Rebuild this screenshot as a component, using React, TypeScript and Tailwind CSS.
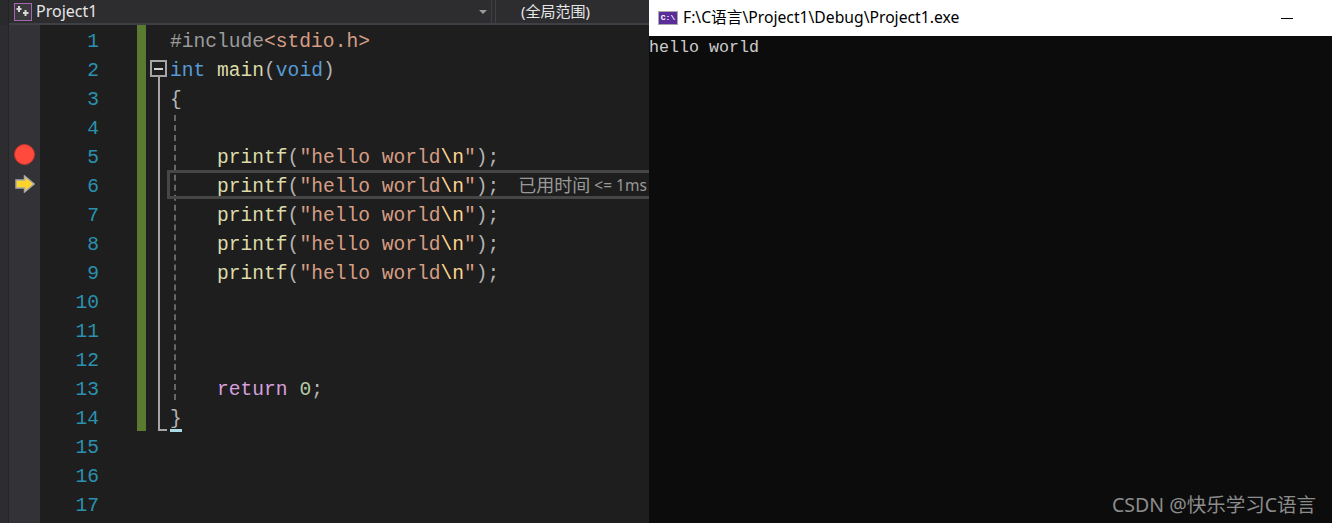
const mono = "[font-family:'Liberation_Mono','Noto_Sans_CJK_SC',monospace]";
const ui = "[font-family:'Noto_Sans','Noto_Sans_CJK_SC',sans-serif]";

function Str({ text }: { text: string }) {
  return (
    <>
      <span className="text-[#d69d85]">"{text}</span>
      <span className="text-[#ffd68f]">\n</span>
      <span className="text-[#d69d85]">"</span>
    </>
  );
}

function Printf() {
  return (
    <>
      {"    "}
      <span className="text-[#dcdcaa]">printf</span>
      <span className="text-[#b4b4b4]">(</span>
      <Str text="hello world" />
      <span className="text-[#b4b4b4]">);</span>
    </>
  );
}

const code = [
  <>
    <span className="text-[#9b9b9b]">#include</span>
    <span className="text-[#d69d85]">&lt;stdio.h&gt;</span>
  </>,
  <>
    <span className="text-[#569cd6]">int</span> <span className="text-[#dcdcaa]">main</span>
    <span className="text-[#b4b4b4]">(</span>
    <span className="text-[#569cd6]">void</span>
    <span className="text-[#b4b4b4]">)</span>
  </>,
  <span className="text-[#b4b4b4]">{"{"}</span>,
  "",
  <Printf />,
  <div className="flex items-start">
    <span>
      <Printf />
    </span>
    <span className={`${ui} ml-[19px] text-[18px] leading-[25px] text-[#999999]`}>已用时间</span>
    <span className={`${ui} ml-[4px] text-[15.500px] leading-[25px] text-[#999999]`}>&lt;= 1ms</span>
  </div>,
  <Printf />,
  <Printf />,
  <Printf />,
  "",
  "",
  "",
  <>
    {"    "}
    <span className="text-[#d8a0df]">return</span> <span className="text-[#b5cea8]">0</span>
    <span className="text-[#b4b4b4]">;</span>
  </>,
  <span className="text-[#b4b4b4]">{"}"}</span>,
];

const lineNumbers = Array.from({ length: 17 }, (_, i) => i + 1);

function ProjectIcon() {
  return (
    <svg width="18" height="18" viewBox="0 0 18 18" className="shrink-0">
      <rect x="0.5" y="0.5" width="17" height="17" fill="#3a3a3d" stroke="#a566b0" />
      <path d="M5 3v6M2.500 6h5M11.500 7v6M9 10h5.500" stroke="#d8d8d8" strokeWidth="2" fill="none" />
    </svg>
  );
}

function ArrowGlyph() {
  return (
    <svg width="20" height="18" viewBox="0 0 20 18" className="-mt-[2px]">
      <path d="M1 5h8.500V1L19 9l-9.500 8v-4H1z" fill="#ffd42a" stroke="#a8a8a8" strokeWidth="1.500" />
    </svg>
  );
}

function TopBar() {
  return (
    <div className="flex h-[25px] bg-[#2d2d30]">
      <div className="w-[9px] bg-[#2a2a2c] border-r border-[#232325]" />
      <div className="flex h-[25px] flex-1 items-center border-b-2 border-[#3f3f46]">
        <div className="flex w-[478px] items-center pl-[5px]">
          <ProjectIcon />
          <span className={`${ui} -mt-px ml-[4px] text-[16px] text-[#e6e6e6]`}>Project1</span>
          <span className="ml-auto h-0 w-0 border-x-[4px] border-x-transparent border-t-[4px] border-t-[#999999]" />
        </div>
        <div className="ml-[4px] h-full w-px bg-[#3f3f46]" />
        <div className="ml-[3px] h-full w-px bg-[#3f3f46]" />
        <span className={`${ui} ml-[25px] text-[15px] text-[#e6e6e6]`}>(全局范围)</span>
      </div>
    </div>
  );
}

function Editor() {
  return (
    <div className={`flex flex-1 overflow-hidden bg-[#1e1e1e] ${mono} text-[19.6px] leading-[29px]`}>
      <div className="w-[9px] bg-[#2d2d30] border-r border-[#252527]" />

      <div className="w-[31px] bg-[#333337]">
        {lineNumbers.map((n) => (
          <div key={n} className="flex h-[29px] items-center justify-center">
            {n === 5 && <div className="-mt-[2px] h-[21px] w-[21px] rounded-full border border-[#c8352c] bg-[#ff4a3d]" />}
            {n === 6 && <ArrowGlyph />}
          </div>
        ))}
      </div>

      <div className="w-[97px] pr-[38px] pt-[3px] text-right text-[#2b91af]">
        {lineNumbers.map((n) => (
          <div key={n} className="h-[29px]">{n}</div>
        ))}
      </div>

      <div className="h-[406px] w-[9px] bg-[#5a7a32]" />

      <div className="relative w-[24px]">
        <div className="absolute left-[4px] top-[35px] flex h-[17px] w-[17px] items-center justify-center border-2 border-[#a5a5a5] bg-[#1e1e1e]">
          <div className="h-[2px] w-[9px] bg-[#d0d0d0]" />
        </div>
        <div className="absolute left-[12px] top-[52px] h-[354px] w-[9px] border-b-2 border-l-2 border-[#a5a5a5]" />
      </div>

      <div className="relative flex-1 whitespace-pre pt-[3px]">
        {code.map((c, i) => (
          <div key={i} className="h-[29px]">{c}</div>
        ))}
        <div className="absolute left-[4px] top-[90px] h-[285px] border-l-2 border-dashed border-[#666666]" />
        <div className="absolute -left-[3px] top-[145px] h-[29px] w-[485px] border-y-[3px] border-l-[3px] border-[#464646]" />
        <div className="absolute left-0 top-[404px] h-[3px] w-[12px] bg-[#add8e6]" />
      </div>
    </div>
  );
}

function ConsoleIcon() {
  return (
    <div className="flex h-[14px] w-[20px] items-center justify-center border border-[#a9a9a9] bg-[#5b2d9a]">
      <span className={`${mono} text-[8px] font-bold leading-none text-white`}>C:\</span>
    </div>
  );
}

function ConsoleWindow() {
  return (
    <div className="flex flex-1 flex-col">
      <div className="flex h-[36px] items-center bg-white pl-[9px] pr-[39px]">
        <ConsoleIcon />
        <span className={`${ui} ml-[5px] text-[15.7px] text-black`}>F:\C语言\Project1\Debug\Project1.exe</span>
        <div className="ml-auto h-px w-[12px] bg-black" />
      </div>
      <div className="flex flex-1 flex-col bg-[#0c0c0c] pt-px">
        <div className={`${mono} text-[16.67px] leading-[22px] text-[#cccccc]`}>hello world</div>
        <div className={`${ui} mt-auto pb-[6px] pr-[16px] text-right text-[19.5px] leading-[24px] text-[#8c8c8c]`}>CSDN @快乐学习C语言</div>
      </div>
    </div>
  );
}

export default function App() {
  return (
    <div className="flex h-[523px] w-[1332px] overflow-hidden">
      <div className="flex w-[649px] flex-col">
        <TopBar />
        <Editor />
      </div>
      <ConsoleWindow />
    </div>
  );
}
